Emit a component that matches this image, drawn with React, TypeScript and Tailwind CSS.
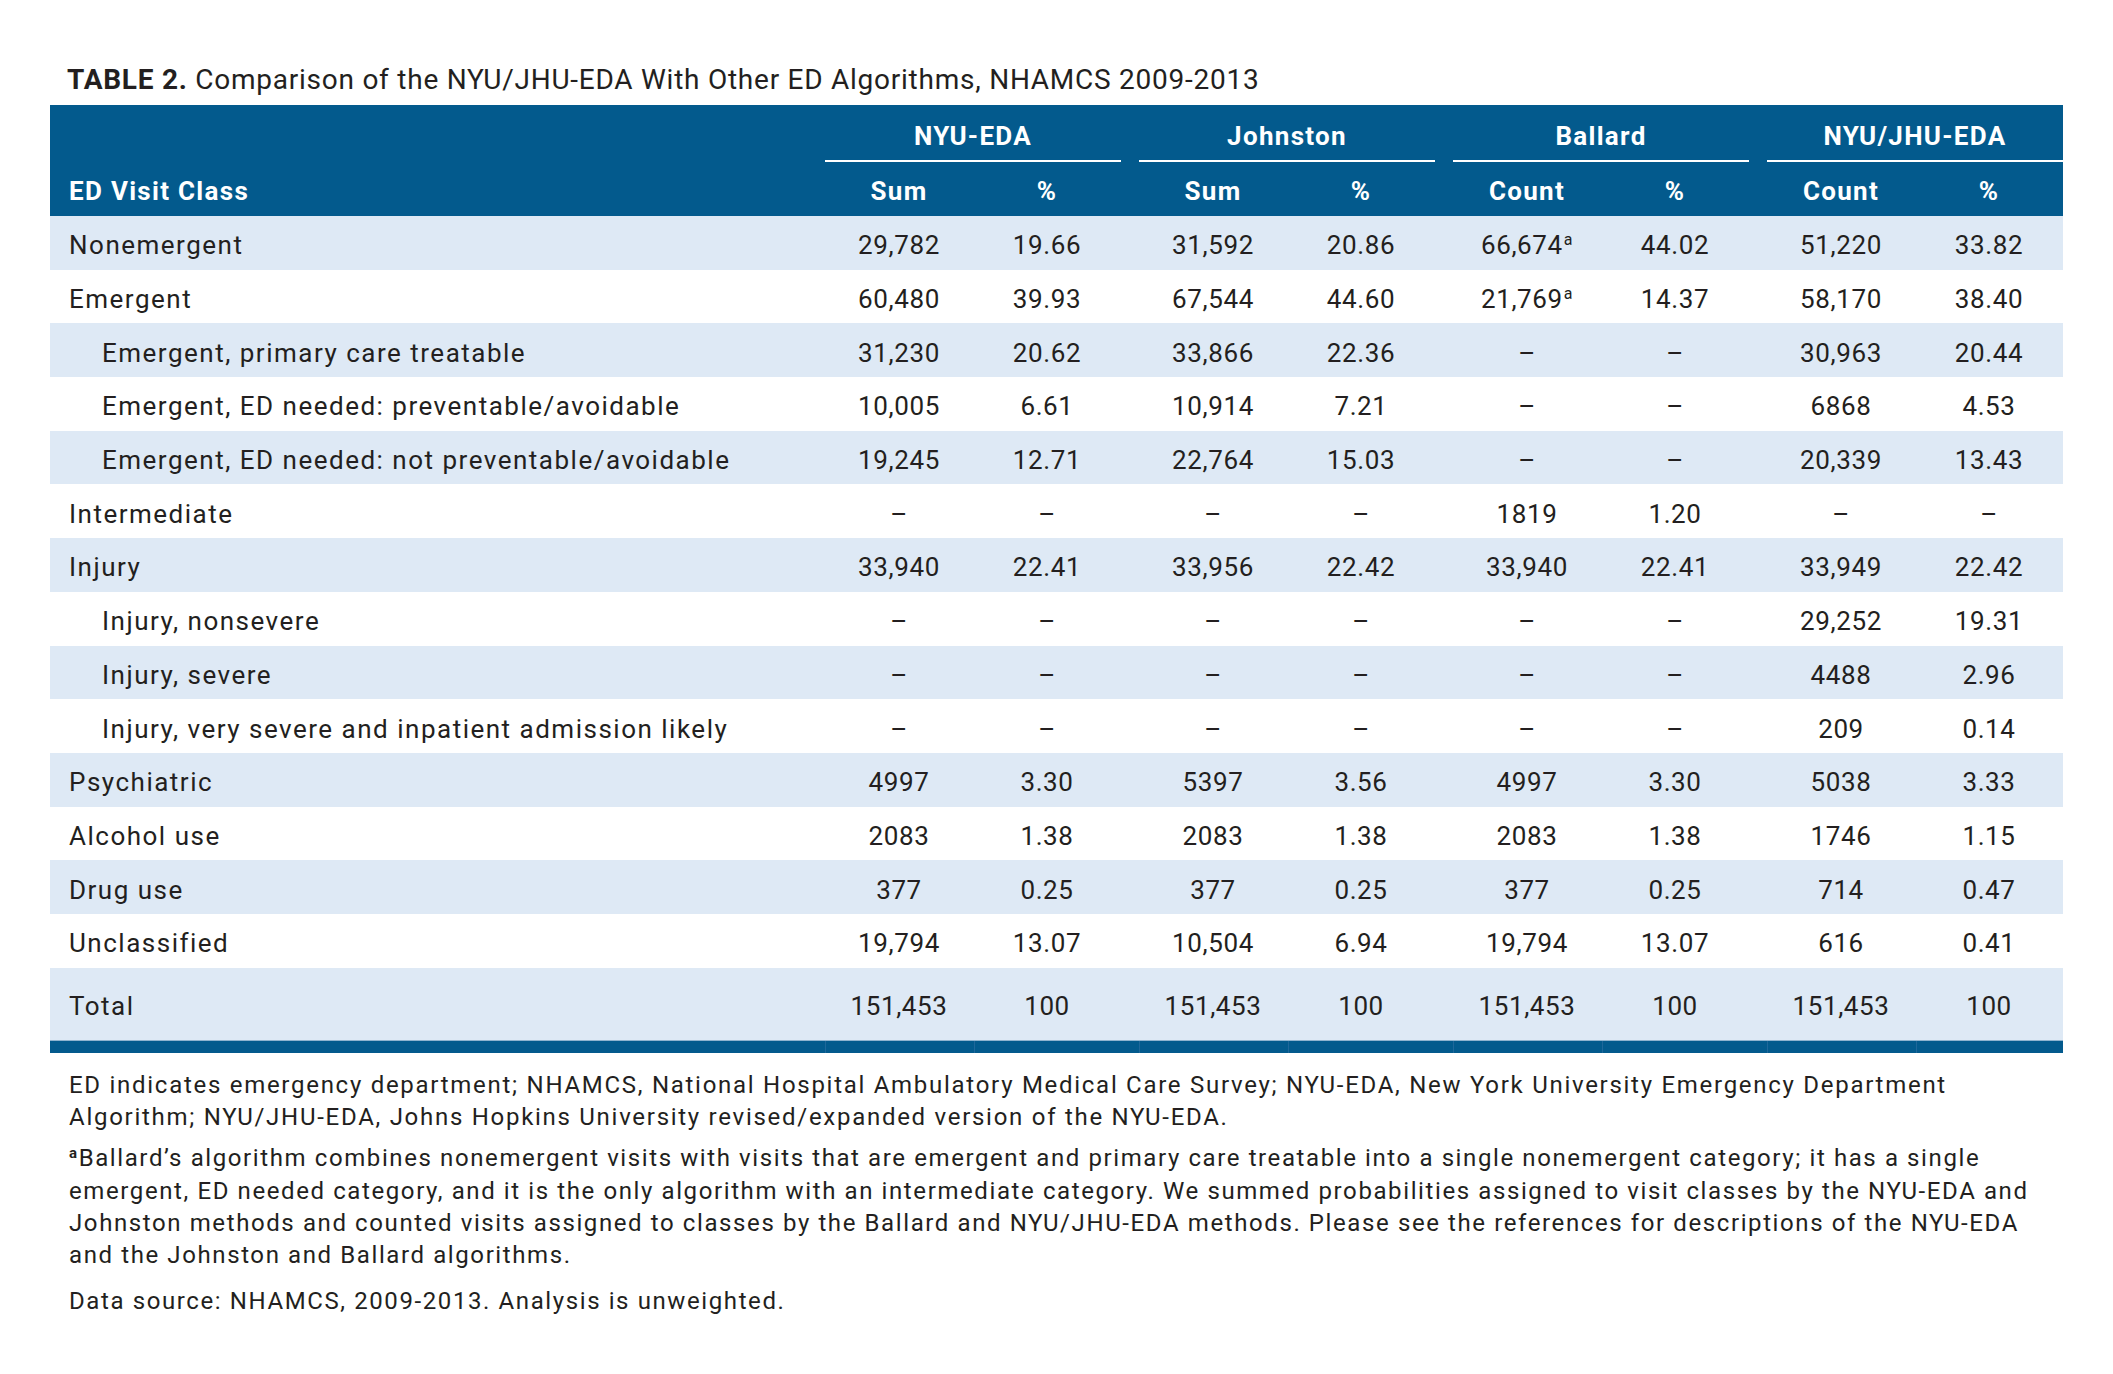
import React from "react";

type Row = {
  label: string;
  indent?: boolean;
  cells: React.ReactNode[];
};

const dash = "–";

const rows: Row[] = [
  { label: "Nonemergent", cells: ["29,782", "19.66", "31,592", "20.86", <Sup key="a">66,674</Sup>, "44.02", "51,220", "33.82"] },
  { label: "Emergent", cells: ["60,480", "39.93", "67,544", "44.60", <Sup key="b">21,769</Sup>, "14.37", "58,170", "38.40"] },
  { label: "Emergent, primary care treatable", indent: true, cells: ["31,230", "20.62", "33,866", "22.36", dash, dash, "30,963", "20.44"] },
  { label: "Emergent, ED needed: preventable/avoidable", indent: true, cells: ["10,005", "6.61", "10,914", "7.21", dash, dash, "6868", "4.53"] },
  { label: "Emergent, ED needed: not preventable/avoidable", indent: true, cells: ["19,245", "12.71", "22,764", "15.03", dash, dash, "20,339", "13.43"] },
  { label: "Intermediate", cells: [dash, dash, dash, dash, "1819", "1.20", dash, dash] },
  { label: "Injury", cells: ["33,940", "22.41", "33,956", "22.42", "33,940", "22.41", "33,949", "22.42"] },
  { label: "Injury, nonsevere", indent: true, cells: [dash, dash, dash, dash, dash, dash, "29,252", "19.31"] },
  { label: "Injury, severe", indent: true, cells: [dash, dash, dash, dash, dash, dash, "4488", "2.96"] },
  { label: "Injury, very severe and inpatient admission likely", indent: true, cells: [dash, dash, dash, dash, dash, dash, "209", "0.14"] },
  { label: "Psychiatric", cells: ["4997", "3.30", "5397", "3.56", "4997", "3.30", "5038", "3.33"] },
  { label: "Alcohol use", cells: ["2083", "1.38", "2083", "1.38", "2083", "1.38", "1746", "1.15"] },
  { label: "Drug use", cells: ["377", "0.25", "377", "0.25", "377", "0.25", "714", "0.47"] },
  { label: "Unclassified", cells: ["19,794", "13.07", "10,504", "6.94", "19,794", "13.07", "616", "0.41"] },
];

const groups = [
  { name: "NYU-EDA", a: "Sum" },
  { name: "Johnston", a: "Sum" },
  { name: "Ballard", a: "Count" },
  { name: "NYU/JHU-EDA", a: "Count" },
];

function Sup({ children }: { children: React.ReactNode }) {
  return (
    <span>
      {children}
      <span className="relative -top-[9px] ml-[1px] text-[16px] leading-none">a</span>
    </span>
  );
}

function DataRow({ row, shaded }: { row: Row; shaded: boolean }) {
  return (
    <div
      className={`grid h-[53.7px] grid-cols-[757px_repeat(4,296px)] items-center gap-x-[18px] pt-[6px] ${
        shaded ? "bg-[#dee9f5]" : "bg-white"
      }`}
    >
      <div className={`tracking-[1.5px] ${row.indent ? "pl-[52px]" : "pl-[19px]"}`}>{row.label}</div>
      {[0, 1, 2, 3].map((g) => (
        <div key={g} className="grid grid-cols-2 text-center tracking-[0.6px]">
          <div>{row.cells[g * 2]}</div>
          <div>{row.cells[g * 2 + 1]}</div>
        </div>
      ))}
    </div>
  );
}

export default function App() {
  return (
    <div className="h-[1374px] w-[2113px] bg-white font-['Roboto',sans-serif] text-[#231f20]">
      <div className="pl-[67px] pt-[64px] text-[28px] leading-[32px] tracking-[0.75px]">
        <span className="font-bold">TABLE 2.</span> Comparison of the NYU/JHU-EDA With Other ED Algorithms, NHAMCS
        2009-2013
      </div>

      <div className="ml-[50px] mt-[9px] w-[2013px]">
        {/* header */}
        <div className="h-[111px] bg-[#035a8d] font-bold text-white">
          <div className="grid grid-cols-[757px_repeat(4,296px)] gap-x-[18px] pt-[16px]">
            <div />
            {groups.map((g) => (
              <div key={g.name} className="text-center text-[26px] leading-[30px] tracking-[1.3px]">
                {g.name}
              </div>
            ))}
          </div>
          <div className="mt-[9px] grid grid-cols-[757px_repeat(4,296px)] gap-x-[18px]">
            <div />
            {groups.map((g) => (
              <div key={g.name} className="h-[2px] bg-white" />
            ))}
          </div>
          <div className="mt-[14px] grid grid-cols-[757px_repeat(4,296px)] items-center gap-x-[18px] text-[26px] leading-[30px] tracking-[1.3px]">
            <div className="pl-[19px]">ED Visit Class</div>
            {groups.map((g) => (
              <div key={g.name} className="grid grid-cols-2 text-center">
                <div>{g.a}</div>
                <div>%</div>
              </div>
            ))}
          </div>
        </div>

        {/* body */}
        <div className="text-[26px]">
          {rows.map((r, i) => (
            <DataRow key={r.label} row={r} shaded={i % 2 === 0} />
          ))}
          <div className="grid h-[72px] grid-cols-[757px_repeat(4,296px)] items-center gap-x-[18px] bg-[#dee9f5] pt-[6px]">
            <div className="pl-[19px] tracking-[1.5px]">Total</div>
            {[0, 1, 2, 3].map((g) => (
              <div key={g} className="grid grid-cols-2 text-center tracking-[0.6px]">
                <div>151,453</div>
                <div>100</div>
              </div>
            ))}
          </div>
        </div>
        <div className="grid h-[13px] grid-cols-[757px_repeat(4,296px)] gap-x-[18px] border-t border-[#8fb3cf] bg-[#035a8d]">
          <div />
          {[0, 1, 2, 3].map((g) => (
            <div key={g} className="grid grid-cols-2 border-l border-[#1f679a]">
              <div />
              <div className="border-l border-[#1f679a]" />
            </div>
          ))}
        </div>
      </div>

      <div className="mt-[16px] pl-[69px] text-[24px] leading-[32.3px] tracking-[1.6px] whitespace-nowrap">
        <p className="tracking-[1.72px]">
          ED indicates emergency department; NHAMCS, National Hospital Ambulatory Medical Care Survey; NYU-EDA, New York
          University Emergency Department
          <br />
          Algorithm; NYU/JHU-EDA, Johns Hopkins University revised/expanded version of the NYU-EDA.
        </p>
        <p className="mt-[9px]">
          <span className="relative -top-[8px] text-[15px] font-bold leading-none">a</span>Ballard’s algorithm combines
          nonemergent visits with visits that are emergent and primary care treatable into a single nonemergent category;
          it has a single
          <br />
          emergent, ED needed category, and it is the only algorithm with an intermediate category. We summed
          probabilities assigned to visit classes by the NYU-EDA and
          <br />
          Johnston methods and counted visits assigned to classes by the Ballard and NYU/JHU-EDA methods. Please see the
          references for descriptions of the NYU-EDA
          <br />
          and the Johnston and Ballard algorithms.
        </p>
        <p className="mt-[14px]">Data source: NHAMCS, 2009-2013. Analysis is unweighted.</p>
      </div>
    </div>
  );
}
